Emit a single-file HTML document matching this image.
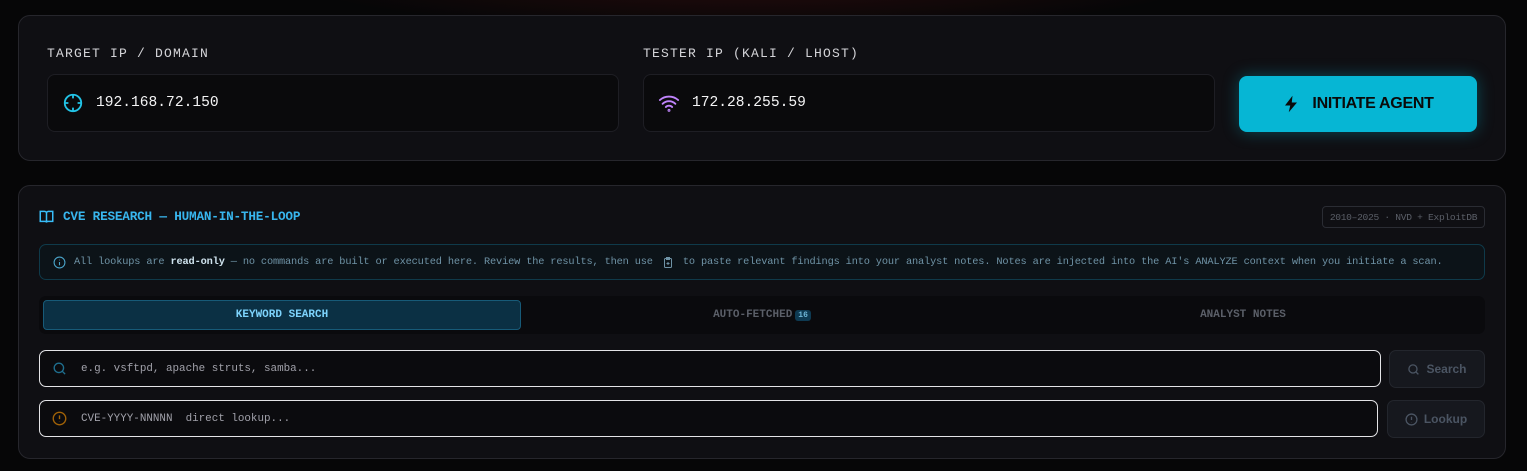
<!DOCTYPE html>
<html><head><meta charset="utf-8"><style>
*{box-sizing:border-box;margin:0;padding:0}
body{width:1527px;height:471px;overflow:hidden;background:#060607;font-family:"Liberation Mono",monospace;position:relative}
.glow{position:absolute;left:300px;top:-60px;width:900px;height:90px;background:radial-gradient(ellipse at center,rgba(90,20,20,.35),rgba(0,0,0,0) 70%)}
.panel{position:absolute;left:18px;width:1488px;background:#0f0f13;border:1px solid #26262c;border-radius:12px}
.abs{position:absolute}
.lbl{font-size:13px;letter-spacing:1.2px;color:#d4d4d8}
.inp{background:#0a0a0c;border:1px solid #1e1e24;border-radius:8px;display:flex;align-items:center;padding-left:14px;color:#f4f4f5;font-size:14.6px}
.inp svg{margin-right:12px}
.btn{background:#06b6d4;border-radius:8px;box-shadow:0 0 16px rgba(6,182,212,.35);display:flex;align-items:center;justify-content:center;font-family:"Liberation Sans",sans-serif;font-weight:bold;font-size:16px;color:#0a0a0a;letter-spacing:-.3px}
.sinp{background:#0b0b0e;border:1px solid #e4e4e7;border-radius:7px;display:flex;align-items:center;padding-left:12px;color:#a1a1aa;font-size:10.9px}
.sbtn{background:#16181e;border:1px solid #23262d;border-radius:7px;display:flex;align-items:center;justify-content:center;font-family:"Liberation Sans",sans-serif;font-weight:bold;font-size:12px;color:#4b5563}
</style></head><body>
<div class="glow"></div>
<div class="panel" style="top:15px;height:146px"></div>
<div class="abs lbl" style="left:47px;top:46px">TARGET IP / DOMAIN</div>
<div class="abs lbl" style="left:643px;top:46px">TESTER IP (KALI / LHOST)</div>
<div class="abs inp" style="left:47px;top:74px;width:572px;height:58px">
<svg width="22" height="22" viewBox="0 0 24 24" fill="none" stroke="#22c3e6" stroke-width="2"><circle cx="12" cy="12" r="9"/><path d="M12 3v4M12 17v4M3 12h4M17 12h4"/></svg>192.168.72.150</div>
<div class="abs inp" style="left:643px;top:74px;width:572px;height:58px">
<svg width="22" height="22" viewBox="0 0 24 24" fill="none" stroke="#c084fc" stroke-width="2" stroke-linecap="round"><path d="M2 8.8a15 15 0 0 1 20 0M5 12.9a10 10 0 0 1 14 0M8.5 16.4a5 5 0 0 1 7 0"/><circle cx="12" cy="20" r=".6"/></svg>172.28.255.59</div>
<div class="abs btn" style="left:1239px;top:76px;width:238px;height:56px">
<svg width="18" height="20" viewBox="0 0 24 24" fill="#0a0a0a" style="margin-right:12px"><path d="M14 1L4 14h7l-2 9 11-13h-7z"/></svg>INITIATE AGENT</div>

<div class="panel" style="top:185px;height:274px"></div>
<svg class="abs" style="left:39px;top:210px" width="15" height="14" viewBox="0 0 24 22" fill="none" stroke="#38bdf8" stroke-width="2.4"><path d="M2 2h7a3 3 0 0 1 3 3v15a2 2 0 0 0-2-2H2zM22 2h-7a3 3 0 0 0-3 3v15a2 2 0 0 1 2-2h8z"/></svg>
<div class="abs" style="left:63px;top:209px;font-size:12.7px;font-weight:bold;color:#38b6ee;letter-spacing:-.2px">CVE RESEARCH — HUMAN-IN-THE-LOOP</div>
<div class="abs" style="left:1322px;top:206px;width:163px;height:22px;border:1px solid #2a2c33;border-radius:4px;font-size:9.6px;color:#5b5f68;display:flex;align-items:center;justify-content:center;letter-spacing:-.3px;white-space:nowrap">2010–2025 · NVD + ExploitDB</div>
<div class="abs" style="left:39px;top:244px;width:1446px;height:36px;border:1px solid #0f3a4a;background:#0c1318;border-radius:7px;display:flex;align-items:center;padding-left:13px;font-size:10.3px;color:#6f93a6;white-space:nowrap;letter-spacing:-.15px">
<svg width="13" height="13" viewBox="0 0 24 24" fill="none" stroke="#4aa3c8" stroke-width="2" style="margin-right:8px"><circle cx="12" cy="12" r="10"/><path d="M12 11v6M12 7v1"/></svg>All lookups are&nbsp;<b style="color:#cfe3ee">read-only</b>&nbsp;— no commands are built or executed here. Review the results, then use&nbsp;<svg width="12" height="13" viewBox="0 0 24 24" fill="none" stroke="#6f93a6" stroke-width="2" style="margin:0 3px"><rect x="5" y="4" width="14" height="18" rx="2"/><path d="M9 2h6v4H9zM12 11v6M9 14h6"/></svg>&nbsp;to paste relevant findings into your analyst notes. Notes are injected into the AI's ANALYZE context when you initiate a scan.</div>
<div class="abs" style="left:39px;top:296px;width:1446px;height:38px;background:#0a0a0d;border-radius:7px"></div>
<div class="abs" style="left:43px;top:300px;width:478px;height:30px;background:#0b3044;border:1px solid #175a78;border-radius:4px;display:flex;align-items:center;justify-content:center;font-size:11px;font-weight:bold;color:#7dd3fc">KEYWORD SEARCH</div>
<div class="abs" style="left:521px;top:300px;width:482px;height:30px;display:flex;align-items:center;justify-content:center;font-size:11px;font-weight:bold;color:#5b5f68">AUTO-FETCHED<span style="margin-left:3px;background:#0e3a52;color:#6fb6d6;font-size:8px;padding:1px 3px;border-radius:3px">16</span></div>
<div class="abs" style="left:1003px;top:300px;width:480px;height:30px;display:flex;align-items:center;justify-content:center;font-size:11px;font-weight:bold;color:#5b5f68">ANALYST NOTES</div>
<div class="abs sinp" style="left:39px;top:350px;width:1342px;height:37px">
<svg width="15" height="15" viewBox="0 0 24 24" fill="none" stroke="#1f6f8f" stroke-width="2.2" style="margin-right:14px"><circle cx="11" cy="11" r="7.5"/><path d="M21 21l-4.5-4.5"/></svg>e.g. vsftpd, apache struts, samba...</div>
<div class="abs sbtn" style="left:1389px;top:350px;width:96px;height:38px"><svg width="13" height="13" viewBox="0 0 24 24" fill="none" stroke="#4b5563" stroke-width="2.4" style="margin-right:6px"><circle cx="11" cy="11" r="7.5"/><path d="M21 21l-4.5-4.5"/></svg>Search</div>
<div class="abs sinp" style="left:39px;top:400px;width:1339px;height:37px">
<svg width="15" height="15" viewBox="0 0 24 24" fill="none" stroke="#a16207" stroke-width="2.2" style="margin-right:14px"><circle cx="12" cy="12" r="10"/><path d="M12 7v6M12 16.5v.5"/></svg>CVE-YYYY-NNNNN&nbsp; direct lookup...</div>
<div class="abs sbtn" style="left:1387px;top:400px;width:98px;height:38px"><svg width="13" height="13" viewBox="0 0 24 24" fill="none" stroke="#4b5563" stroke-width="2.4" style="margin-right:6px"><circle cx="12" cy="12" r="10"/><path d="M12 7v6M12 16.5v.5"/></svg>Lookup</div>
</body></html>
